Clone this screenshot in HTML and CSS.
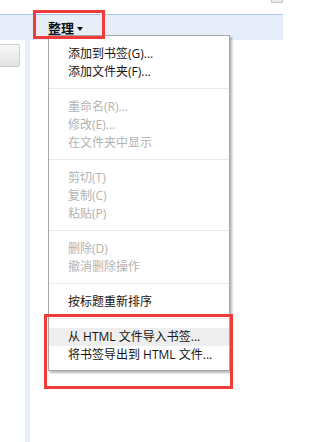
FILE: index.html
```html
<!DOCTYPE html>
<html lang="zh-CN">
<head>
  <meta charset="UTF-8">
  <title>书签管理器</title>
  <link rel="stylesheet" href="styles.css">
</head>
<body>
<div class="page">
  <div class="topbar"><span class="corner"></span></div>
  <div class="toolbar">
    <span class="organize">整理 <span class="arrow"></span></span>
  </div>
  <div class="workspace">
    <div class="side-btn"></div>
    <div class="strip"></div>
  </div>

  <div class="menu">
    <div class="item">添加到书签(G)...</div>
    <div class="item">添加文件夹(F)...</div>
    <div class="sep"></div>
    <div class="item off">重命名(R)...</div>
    <div class="item off">修改(E)...</div>
    <div class="item off">在文件夹中显示</div>
    <div class="sep"></div>
    <div class="item off">剪切(T)</div>
    <div class="item off">复制(C)</div>
    <div class="item off">粘贴(P)</div>
    <div class="sep"></div>
    <div class="item off">删除(D)</div>
    <div class="item off">撤消删除操作</div>
    <div class="sep"></div>
    <div class="item">按标题重新排序</div>
    <div class="sep"></div>
    <div class="item hover">从 HTML 文件导入书签...</div>
    <div class="item">将书签导出到 HTML 文件...</div>
  </div>

  <div class="mark mark-top"></div>
  <div class="mark mark-bottom"></div>
</div>
</body>
</html>
```

FILE: styles.css
```css
* { box-sizing: border-box; }
html, body {
  margin: 0;
  height: 100%;
  background: #fff;
  font-family: "Open Sans", "Noto Sans CJK SC", sans-serif;
  overflow: hidden;
}

.page {
  position: relative;
  width: 327px;
  height: 442px;
}

.topbar {
  height: 14px;
  display: flex;
  justify-content: flex-end;
  padding-right: 44px;
}

.corner {
  width: 12px;
  height: 3px;
  border: 1px solid #c4c4c4;
  border-top: none;
  background: #ececec;
}

.toolbar {
  width: 283px;
  height: 26px;
  border-top: 1px solid #a9c8f0;
  background: #e8eef9;
  padding-left: 48px;
  display: flex;
  align-items: center;
}

.organize {
  font-family: "Noto Sans CJK SC", sans-serif;
  font-weight: bold;
  font-size: 13px;
  color: #111;
  display: flex;
  align-items: center;
  gap: 3px;
}

.arrow {
  width: 0;
  height: 0;
  border-left: 3px solid transparent;
  border-right: 3px solid transparent;
  border-top: 4px solid #111;
  margin-top: 2px;
}

.workspace {
  display: flex;
  height: 402px;
}

.side-btn {
  width: 20px;
  height: 23px;
  margin-top: 4px;
  border: 1px solid #cdcdcd;
  border-left: none;
  border-radius: 0 2px 2px 0;
  background: linear-gradient(#f7f7f7, #e3e3e3);
}

.strip {
  width: 5px;
  margin-left: 5px;
  background: #e8eef9;
}

/* dropdown */
.menu {
  position: absolute;
  left: 48px;
  top: 35px;
  width: 182px;
  padding: 9px 0 6px 0;
  background: #fff;
  border: 1px solid #a7a7a7;
  box-shadow: 2px 2px 2px rgba(0, 0, 0, 0.28);
  font-size: 12px;
}

.item {
  height: 18px;
  line-height: 18px;
  padding-left: 19px;
  color: #151515;
  white-space: nowrap;
}

.item.off { color: #b3b3b3; }
.item.hover { background: #eeeeee; }

.sep {
  height: 1px;
  margin: 7px 0 9px 0;
  background: #e9e9e9;
}

/* red annotation boxes */
.mark {
  position: absolute;
  border: 3px solid #f03b3b;
}

.mark-top {
  left: 33px;
  top: 10px;
  width: 72px;
  height: 29px;
}

.mark-bottom {
  left: 44px;
  top: 314px;
  width: 189px;
  height: 75px;
}
```
